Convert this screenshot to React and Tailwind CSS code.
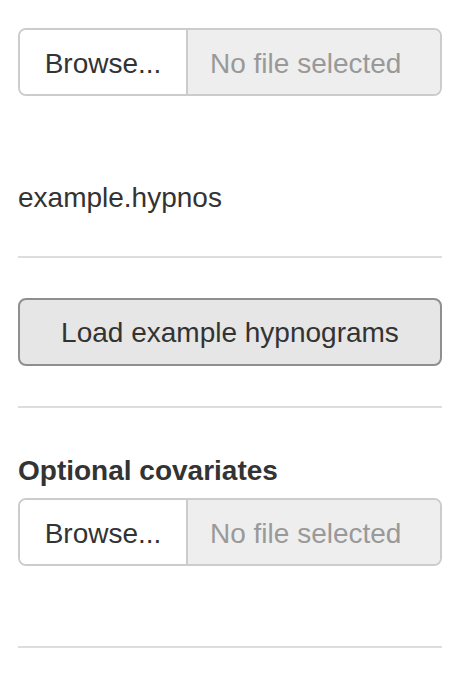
const FileInput = () => (
  <div className="flex h-[68px] w-[424px] rounded-[8px] border-2 border-[#cccccc] overflow-hidden">
    <div className="flex items-center justify-center w-[168px] bg-white border-r-2 border-[#cccccc] pt-[3px] text-[#333333]">
      Browse...
    </div>
    <div className="flex flex-1 items-center bg-[#eeeeee] pl-[22px] pt-[3px] text-[#999999]">
      No file selected
    </div>
  </div>
);

const Rule = () => <div className="h-[2px] w-[424px] bg-[#dddddd]" />;

export default function App() {
  return (
    <div
      className="bg-white min-h-[674px] pl-[18px] pt-[28px] text-[28px] leading-[40px] text-[#333333]"
      style={{ fontFamily: '"Liberation Sans", Arial, sans-serif' }}
    >
      <FileInput />

      <div className="mt-[82px]">example.hypnos</div>

      <div className="mt-[38px]">
        <Rule />
      </div>

      <button
        type="button"
        className="mt-[40px] flex h-[68px] w-[424px] items-center justify-center rounded-[8px] border-2 border-[#8f8f8f] bg-[#e6e6e6] pt-[2px] text-[#333333]"
      >
        Load example hypnograms
      </button>

      <div className="mt-[40px]">
        <Rule />
      </div>

      <div className="mt-[43px] font-bold">Optional covariates</div>

      <div className="mt-[7px]">
        <FileInput />
      </div>

      <div className="mt-[80px]">
        <Rule />
      </div>
    </div>
  );
}
